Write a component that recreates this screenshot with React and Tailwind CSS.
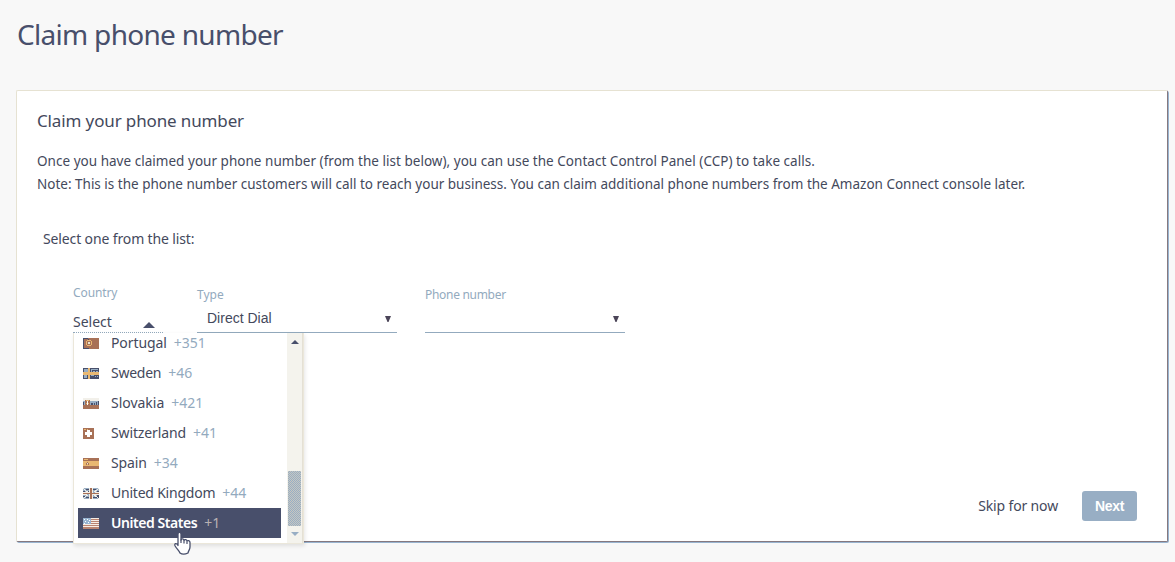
import React from 'react';

function Flag({ code }) {
  const w = code === 'ch' ? 11 : 16;
  return (
    <svg width={w} height="11" viewBox={`0 0 ${w} 11`} shapeRendering="crispEdges" className="shrink-0">
      {code === 'pt' && (
        <>
          <path fill="#a87157" d="M0 0h16v11H0z" />
          <path fill="#484f6b" d="M0 0h5v1H0zM0 1h1v10H0zM1 10h5v1H1zM5 1h1v2H5z" />
          <path fill="#e9b872" d="M4 2h4v1H4zM3 3h1v4H3zM8 3h1v4H8zM4 7h4v1H4z" />
          <path fill="#e8e4d4" d="M5 4h2v2H5z" />
        </>
      )}
      {code === 'se' && (
        <>
          <path fill="#484f6b" d="M0 0h16v11H0z" />
          <path fill="#98aec4" d="M1 1h4v3H1zM8 1h7v1H8zM8 2h1v2H8zM10 3h2v1h-2zM13 3h2v1h-2zM1 7h3v3H1zM8 7h3v1H8zM12 8h1v1h-1zM14 8h1v1h-1z" />
          <path fill="#e9b872" d="M5 0h2v11H5zM0 4h16v3H0z" />
        </>
      )}
      {code === 'sk' && (
        <>
          <path fill="#f2f0ea" d="M0 0h16v4H0z" />
          <path fill="#98aec4" d="M0 3h16v5H0z" />
          <path fill="#484f6b" d="M0 4h1v3H0zM8 5h2v2H8zM11 5h1v2h-1zM13 4h1v3h-1zM15 3h1v5h-1z" />
          <path fill="#a87157" d="M0 7h16v4H0zM2 2h5v6H2z" />
          <path fill="#e9b872" d="M3 2h3v1H3zM3 5h3v1H3z" />
          <path fill="#fff" d="M4 3h1v4H4z" />
        </>
      )}
      {code === 'ch' && (
        <>
          <path fill="#a87157" d="M0 0h11v11H0z" />
          <path fill="#fff" d="M4 2h3v7H4zM2 4h7v3H2z" />
          <path fill="#e9b872" d="M1 1h2v1H1zM4 1h1v1H4z" />
        </>
      )}
      {code === 'es' && (
        <>
          <path fill="#a87157" d="M0 0h16v11H0z" />
          <path fill="#e9b872" d="M0 3h16v5H0zM1 1h4v1H1z" />
          <path fill="#a87157" d="M4 4h1v1H4zM3 5h1v2H3zM5 5h1v2H5z" />
          <path fill="#e8e4d4" d="M4 5h1v1H4z" />
        </>
      )}
      {code === 'gb' && (
        <>
          <path fill="#98aec4" d="M0 0h16v11H0z" />
          <path fill="#484f6b" d="M3 1h3v1H3zM10 1h3v1h-3zM0 3h2v1H0zM14 3h2v1h-2zM0 8h2v1H0zM3 9h3v1H3zM10 9h4v1h-4zM14 7h2v3h-2zM5 3h1v1H5z" />
          <path fill="#f3eee6" d="M0 0l7 5H5L0 1zM16 0L9 5h2l5-4zM0 11l7-5H5l-5 4zM16 11L9 6h2l5 4zM6 0h4v11H6zM0 4h16v3H0z" />
          <path fill="#a87157" d="M7 0h2v11H7zM0 5h16v1H0z" />
        </>
      )}
      {code === 'us' && (
        <>
          <path fill="#f6ece4" d="M0 0h16v11H0z" />
          <path fill="#b98370" d="M8 1h8v1H8zM8 3h8v1H8zM8 5h8v1H8zM0 7h16v1H0zM0 9h16v2H0z" />
          <path fill="#98b4d0" d="M0 0h8v6H0z" />
          <path fill="#fff" d="M1 1h1v1H1zM4 1h1v1H4zM6 2h1v1H6zM2 3h1v1H2zM5 4h1v1H5zM1 5h1v1H1z" />
        </>
      )}
    </svg>
  );
}

const countries = [
  { code: 'pt', name: 'Portugal', dial: '+351', fit: 'tracking-[-0.1px]' },
  { code: 'se', name: 'Sweden', dial: '+46', fit: 'tracking-[-0.25px]' },
  { code: 'sk', name: 'Slovakia', dial: '+421', fit: 'tracking-[-0.02px]' },
  { code: 'ch', name: 'Switzerland', dial: '+41', fit: 'tracking-[-0.13px]' },
  { code: 'es', name: 'Spain', dial: '+34', fit: 'tracking-[-0.15px]' },
  { code: 'gb', name: 'United Kingdom', dial: '+44', fit: 'tracking-[-0.22px]' },
  { code: 'us', name: 'United States', dial: '+1', fit: 'tracking-[-0.45px]' },
];

function CountryMenu() {
  return (
    <div className="absolute left-0 top-[54px] z-10 flex h-[211px] w-[231px] overflow-hidden border border-t-0 border-[#ebe7da] bg-white shadow-[1px_2px_4px_rgba(0,0,0,0.1)]">
      <ul className="-mt-[5px] w-[213px] pl-1">
        {countries.map((c) => {
          const active = c.code === 'us';
          return (
            <li
              key={c.code}
              className={`flex h-[30px] w-[203px] items-center pl-[5px] text-[14px] ${active ? 'bg-[#484f6b] font-semibold text-white' : 'text-[#44495c]'}`}
            >
              <span className="flex w-7 shrink-0">
                <Flag code={c.code} />
              </span>
              <span className={`-mt-px whitespace-nowrap ${c.fit}`}>{c.name}</span>
              <span className={`-mt-px ml-[7px] font-normal ${active ? 'text-[#b9b1b3]' : 'text-[#93aabe]'}`}>{c.dial}</span>
            </li>
          );
        })}
      </ul>
      <div className="flex w-4 flex-col items-center border-r border-[#e4e0d5] bg-[#f4f3ed]">
        <svg width="8" height="4" viewBox="0 0 8 4" className="mt-[7px]">
          <path d="M4 0l4 4H0z" fill="#484f6b" />
        </svg>
        <div className="mt-[127px] h-[55px] w-[13px] bg-[#a9b9c3] bg-[repeating-conic-gradient(#98aec4_0_25%,#c6c7c1_0_50%)] bg-[size:2px_2px]" />
        <svg width="8" height="4" viewBox="0 0 8 4" className="mt-[6px]">
          <path d="M0 0h8L4 4z" fill="#98aec4" />
        </svg>
      </div>
    </div>
  );
}

function Hand() {
  return (
    <svg width="20" height="24" viewBox="0 0 20 24" className="absolute left-[99px] top-[252px] z-20">
      <path
        d="M6 14.500V3.200C6 .6 9 .6 9 3.200V9c.5-1.700 3-1.400 3 .4.6-1.400 3-1 3 .8.7-1.100 3-.7 3 1.300V16c0 2.500-1.500 3.600-2 6-3 1.500-6 1.500-8 0-.5-2-3.400-4.200-5-7.300-.9-2.100 1.400-3.100 3-.2z"
        fill="#fff"
        stroke="#484f6b"
        strokeWidth="1.300"
        strokeLinejoin="round"
      />
      <path d="M9 8.500V12M12 9.500V12.500M15 10.500V13" stroke="#484f6b" strokeWidth="1.200" />
    </svg>
  );
}

function DownArrow() {
  return (
    <svg width="6" height="6" viewBox="0 0 6 6">
      <path d="M0 0h6L3.500 6h-1z" fill="#4b4558" />
    </svg>
  );
}

export default function App() {
  return (
    <main className="h-[562px] w-[1175px] overflow-hidden bg-[#f8f8f8] pl-4 font-['Noto_Sans','Open_Sans',sans-serif] text-[#44495c]">
      <header className="h-[90px] pl-px pt-[14px]">
        <h1 className="w-max whitespace-nowrap text-[28px] leading-10 tracking-[-0.7px] text-[#484f6b]">Claim phone number</h1>
      </header>
      <section className="flex h-[452px] w-[1152px] flex-col rounded-[2px] border border-[#e6e2d2] border-b-[#85787f] border-r-[#85787f] bg-white pl-5 shadow-[1px_1px_0_#98b4d0]">
        <h2 className="mt-[18px] h-6 w-max text-[17px] leading-6 tracking-[-0.13px]">Claim your phone number</h2>
        <div className="mt-[17px] text-[13.500px] leading-[23px]">
          <p className="w-max tracking-[0.028px]">
            Once you have claimed your phone number (from the list below), you can use the Contact Control Panel (CCP) to take calls.
          </p>
          <p className="w-max tracking-[0px]">
            Note: This is the phone number customers will call to reach your business. You can claim additional phone numbers from the Amazon Connect console later.
          </p>
        </div>
        <p className="ml-[6px] mt-[31px] w-max text-[14px] leading-[23px] tracking-[-0.13px]">Select one from the list:</p>
        <div className="ml-9 mt-[29px] flex h-[54px]">
          <div className="relative w-[124px]">
            <div className="h-8 text-[12px] leading-7 tracking-[-0.1px] text-[#93aabe]">Country</div>
            <div className="flex h-[22px] w-[90px] items-center justify-between border-b border-dotted border-[#93aabe] pr-2 text-[14px]">
              <span>Select</span>
              <svg width="12" height="6" viewBox="0 0 12 6" className="mt-[6px]">
                <path d="M6 0l6 6H0z" fill="#484f6b" />
              </svg>
            </div>
            <CountryMenu />
            <Hand />
          </div>
          <div className="w-[228px]">
            <label className="block h-[26px] text-[12px] leading-8 text-[#93aabe]">Type</label>
            <div className="flex h-[28px] w-[200px] items-center justify-between border-b border-[#93aabe] pl-[10px] pr-[6px] font-['Liberation_Sans',sans-serif] text-[14px]">
              <span>Direct Dial</span>
              <DownArrow />
            </div>
          </div>
          <div className="w-[200px]">
            <label className="block h-[26px] text-[12px] leading-8 tracking-[-0.3px] text-[#93aabe]">Phone number</label>
            <div className="flex h-[28px] items-center justify-end border-b border-[#93aabe] pr-[6px]">
              <DownArrow />
            </div>
          </div>
        </div>
        <footer className="mb-5 mr-[30px] mt-auto flex items-center justify-end gap-6">
          <span className="-mt-[2px] text-[14px] tracking-[-0.15px]">Skip for now</span>
          <button className="h-[30px] w-[55px] rounded-[3px] bg-[#98aec4] font-['Liberation_Sans',sans-serif] text-[14px] font-bold tracking-[-0.3px] text-white">
            Next
          </button>
        </footer>
      </section>
    </main>
  );
}
